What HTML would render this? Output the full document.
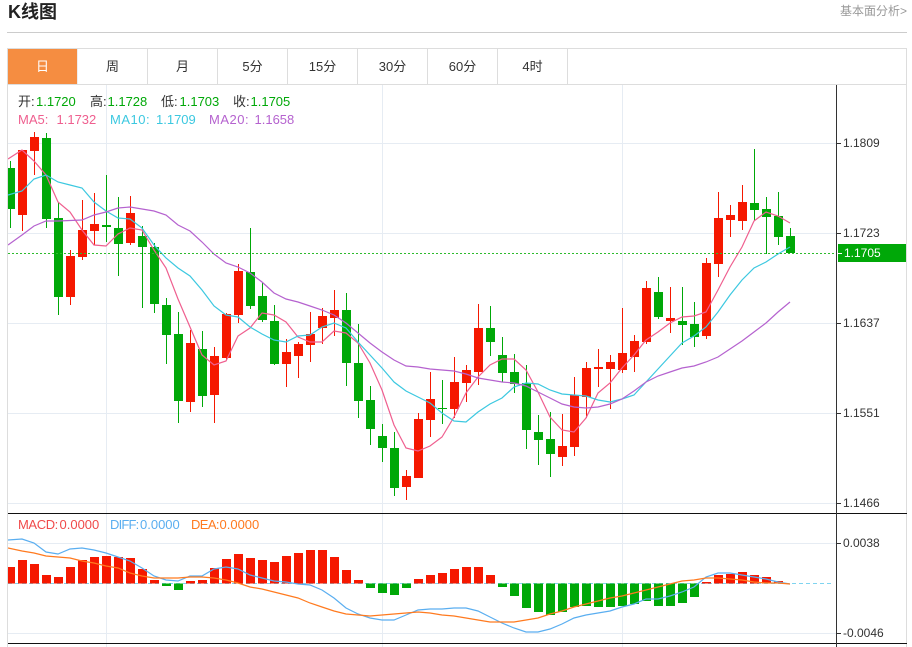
<!DOCTYPE html>
<html><head><meta charset="utf-8"><style>
html,body{margin:0;padding:0;background:#fff;width:912px;height:647px;overflow:hidden}
body{position:relative;font-family:"Liberation Sans","Noto Sans CJK SC",sans-serif}
.a{position:absolute;white-space:nowrap}
.tab{position:absolute;top:49px;height:35px;line-height:35px;width:69px;text-align:center;font-size:13px;color:#333;border-right:1px solid #ddd}
.l{position:absolute;white-space:nowrap;font-size:13px;line-height:18px}
.g{color:#00a808}.p{color:#ef5f8f}.c{color:#3cc8e0}.u{color:#b562cf}.ax{position:absolute;left:843px;font-size:12px;color:#333;line-height:14px}
.t1{top:93px}.t2{top:111px}.t3{top:516px}.k{color:#333}
</style></head><body>
<div class="a" style="left:8px;top:1px;font-size:18px;font-weight:bold;color:#222;line-height:23px">K线图</div>
<div class="a" style="right:5px;top:3px;font-size:12px;color:#999;line-height:16px">基本面分析&gt;</div>
<div class="a" style="left:7px;top:32px;width:900px;height:1px;background:#ccc"></div>
<div class="a" style="left:7px;top:48px;width:898px;height:599px;border:1px solid #ddd;border-bottom:0"></div>
<div class="a" style="left:8px;top:84px;width:898px;height:1px;background:#ddd"></div>
<div class="tab" style="left:8px;background:#f58d41;color:#fff;border-right:1px solid #eee">日</div>
<div class="tab" style="left:78px">周</div>
<div class="tab" style="left:148px">月</div>
<div class="tab" style="left:218px">5分</div>
<div class="tab" style="left:288px">15分</div>
<div class="tab" style="left:358px">30分</div>
<div class="tab" style="left:428px">60分</div>
<div class="tab" style="left:498px">4时</div>
<svg class="a" style="left:0;top:0" width="912" height="647" viewBox="0 0 912 647">
<defs><clipPath id="k"><rect x="8" y="85" width="828" height="562"/></clipPath></defs>
<path d="M8 143.5H836M8 233.5H836M8 323.5H836M8 413.5H836M8 503.5H836M8 543.5H836M8 633.5H836M106.5 85V647M382.5 85V647M622.5 85V647" stroke="#e6ecf3" fill="none"/>
<g clip-path="url(#k)">
<path fill="#00a808" d="M10 161h1v67h-1zM46 133h1v95h-1zM58 202h1v113h-1zM106 175h1v67h-1zM118 197h1v79h-1zM142 226h1v82h-1zM154 243h1v70h-1zM166 298h1v66h-1zM178 312h1v111h-1zM202 331h1v76h-1zM250 228h1v81h-1zM262 283h1v39h-1zM274 305h1v60h-1zM346 293h1v93h-1zM358 324h1v94h-1zM370 386h1v59h-1zM382 424h1v38h-1zM394 432h1v64h-1zM442 380h1v44h-1zM490 306h1v50h-1zM502 337h1v45h-1zM514 354h1v39h-1zM526 365h1v84h-1zM538 415h1v50h-1zM550 412h1v65h-1zM658 277h1v42h-1zM682 287h1v58h-1zM694 302h1v45h-1zM754 149h1v72h-1zM766 197h1v57h-1zM778 192h1v53h-1zM790 228h1v25h-1z
M8 168h7v41h-7zM42 138h9v81h-9zM54 218h9v79h-9zM102 225h9v2h-9zM114 228h9v16h-9zM138 236h9v11h-9zM150 247h9v57h-9zM162 305h9v30h-9zM174 334h9v67h-9zM198 349h9v47h-9zM246 272h9v34h-9zM258 296h9v24h-9zM270 321h9v43h-9zM342 310h9v53h-9zM354 363h9v38h-9zM366 400h9v29h-9zM378 436h9v12h-9zM390 448h9v40h-9zM438 408h9v1h-9zM486 328h9v14h-9zM498 355h9v18h-9zM510 372h9v12h-9zM522 383h9v47h-9zM534 432h9v8h-9zM546 439h9v15h-9zM654 292h9v25h-9zM678 321h9v4h-9zM690 324h9v13h-9zM750 203h9v7h-9zM762 209h9v8h-9zM774 216h9v21h-9zM786 236h9v17h-9z"/>
<path fill="#f51800" d="M22 150h1v81h-1zM34 132h1v43h-1zM70 250h1v55h-1zM82 200h1v60h-1zM94 193h1v52h-1zM130 196h1v49h-1zM190 330h1v82h-1zM214 347h1v76h-1zM226 313h1v47h-1zM238 264h1v59h-1zM286 339h1v48h-1zM298 342h1v36h-1zM310 312h1v50h-1zM322 308h1v36h-1zM334 290h1v46h-1zM406 470h1v30h-1zM418 413h1v65h-1zM430 372h1v65h-1zM454 357h1v61h-1zM466 365h1v37h-1zM478 304h1v81h-1zM562 414h1v52h-1zM574 377h1v79h-1zM586 362h1v56h-1zM598 349h1v38h-1zM610 355h1v54h-1zM622 308h1v65h-1zM634 335h1v37h-1zM646 281h1v63h-1zM670 287h1v46h-1zM706 258h1v81h-1zM718 192h1v85h-1zM730 205h1v32h-1zM742 185h1v45h-1z
M18 150h9v65h-9zM30 137h9v14h-9zM66 256h9v41h-9zM78 230h9v27h-9zM90 224h9v7h-9zM126 213h9v30h-9zM186 343h9v59h-9zM210 356h9v39h-9zM222 314h9v44h-9zM234 271h9v44h-9zM282 352h9v12h-9zM294 344h9v12h-9zM306 334h9v11h-9zM318 316h9v12h-9zM330 310h9v8h-9zM402 476h9v11h-9zM414 419h9v59h-9zM426 399h9v21h-9zM450 382h9v27h-9zM462 370h9v13h-9zM474 328h9v44h-9zM558 446h9v11h-9zM570 395h9v52h-9zM582 368h9v29h-9zM594 367h9v2h-9zM606 362h9v7h-9zM618 353h9v17h-9zM630 341h9v16h-9zM642 288h9v54h-9zM666 318h9v3h-9zM702 263h9v73h-9zM714 218h9v46h-9zM726 215h9v5h-9zM738 202h9v19h-9z"/>
<polyline fill="none" stroke="#ef5f8f" stroke-width="1.2" points="8,159 22,150 34,161 46,175 58,202 70,212 82,230 94,245 106,246 118,234 130,228 142,230 154,250 166,268 178,299 190,327 202,355 214,365 226,361 238,336 250,328 262,313 274,315 286,322 298,337 310,342 322,342 334,331 346,333 358,343 370,363 382,390 394,425 406,448 418,451 430,446 442,437 454,417 466,393 478,377 490,365 502,359 514,359 526,370 538,392 550,417 562,430 574,432 586,418 598,393 610,383 622,368 634,355 646,340 658,332 670,323 682,317 694,316 706,312 718,290 730,267 742,247 754,221 766,212 778,216 790,223"/>
<polyline fill="none" stroke="#3cc8e0" stroke-width="1.2" points="8,195 22,191 34,179 46,175 58,182 70,185 82,188 94,202 106,211 118,218 130,219 142,228 154,245 166,258 178,268 190,276 202,290 214,306 226,315 238,317 250,327 262,334 274,340 286,342 298,336 310,335 322,327 334,323 346,328 358,342 370,355 382,368 394,382 406,391 418,397 430,403 442,413 454,421 466,422 478,412 490,404 502,398 514,387 526,383 538,384 550,390 562,394 574,395 586,396 598,400 610,402 622,399 634,395 646,382 658,369 670,356 682,343 694,336 706,327 718,312 730,295 742,280 754,268 766,262 778,254 790,247"/>
<polyline fill="none" stroke="#b562cf" stroke-width="1.2" points="8,245 22,235 34,226 46,221 58,221 70,220.5 82,220 94,215 106,212 118,208 130,207 142,209 154,211 166,215 178,225 190,231 202,242 214,254 226,263 238,267 250,273 262,282 274,293 286,299 298,302 310,306 322,310 334,315 346,323 358,333 370,343 382,352 394,360 406,366 418,367 430,369 442,370 454,371 466,374 478,378 490,380 502,382 514,383 526,386 538,392 550,398 562,404 574,407 586,408 598,407 610,404 622,399 634,391 646,382 658,376 670,372 682,368 694,366 706,362 718,357 730,349 742,341 754,332 766,323 778,312 790,302"/>
<path d="M8 253.5H836" stroke="#2dbb2d" stroke-dasharray="2 2"/>
<path d="M8 583.5H832" stroke="#7fd4f0" stroke-dasharray="4 3"/>
<path fill="#f51800" d="M8 567h7V583.5h-7zM18 560h9V583.5h-9zM30 564h9V583.5h-9zM42 575h9V583.5h-9zM54 577h9V583.5h-9zM66 567h9V583.5h-9zM78 560h9V583.5h-9zM90 557h9V583.5h-9zM102 556h9V583.5h-9zM114 557h9V583.5h-9zM126 558h9V583.5h-9zM138 569h9V583.5h-9zM150 580h9V583.5h-9zM186 581h9V583.5h-9zM198 580h9V583.5h-9zM210 568h9V583.5h-9zM222 559h9V583.5h-9zM234 554h9V583.5h-9zM246 558h9V583.5h-9zM258 560h9V583.5h-9zM270 562h9V583.5h-9zM282 556h9V583.5h-9zM294 553h9V583.5h-9zM306 550h9V583.5h-9zM318 550h9V583.5h-9zM330 557h9V583.5h-9zM342 570h9V583.5h-9zM354 580h9V583.5h-9zM414 579h9V583.5h-9zM426 575h9V583.5h-9zM438 573h9V583.5h-9zM450 569h9V583.5h-9zM462 567h9V583.5h-9zM474 567h9V583.5h-9zM486 575h9V583.5h-9zM702 582h9V583.5h-9zM714 575h9V583.5h-9zM726 574h9V583.5h-9zM738 572h9V583.5h-9zM750 575h9V583.5h-9zM762 577h9V583.5h-9zM774 581h9V583.5h-9z"/>
<path fill="#00a808" d="M162 583.5h9V586h-9zM174 583.5h9V590h-9zM366 583.5h9V588h-9zM378 583.5h9V593h-9zM390 583.5h9V595h-9zM402 583.5h9V588h-9zM498 583.5h9V587h-9zM510 583.5h9V596h-9zM522 583.5h9V608h-9zM534 583.5h9V612h-9zM546 583.5h9V615h-9zM558 583.5h9V612h-9zM570 583.5h9V607h-9zM582 583.5h9V606h-9zM594 583.5h9V607h-9zM606 583.5h9V607h-9zM618 583.5h9V606h-9zM630 583.5h9V604h-9zM642 583.5h9V601h-9zM654 583.5h9V606h-9zM666 583.5h9V606h-9zM678 583.5h9V603h-9zM690 583.5h9V597h-9z"/>
<polyline fill="none" stroke="#5aaef0" stroke-width="1.2" points="8,540 22,539 34,543 46,552 58,554 70,549 82,548 94,550 106,553 118,557 130,561 142,568 154,576 166,580 178,581 190,576 202,576 214,569 226,567 238,569 250,575 262,578 274,581 286,582 298,584 310,585 322,590 334,598 346,608 358,614 370,618 382,620 394,620 406,615 418,610 430,609 442,609 454,608 466,608 478,611 490,617 502,623 514,628 526,632 538,632 550,629 562,624 574,618 586,615 598,613 610,611 622,607 634,604 646,599 658,599 670,596 682,592 694,587 706,577 718,573 730,573 742,575 754,577 766,579 778,582 790,584"/>
<polyline fill="none" stroke="#ff7a1f" stroke-width="1.2" points="8,548 22,551 34,553 46,556 58,557 70,558 82,561 94,563 106,566 118,568 130,573 142,576 154,578 166,578 178,578 190,577 202,577 214,578 226,580 238,583 250,587 262,589 274,592 286,595 298,598 310,603 322,607 334,611 346,614 358,615 370,616 382,615 394,614 406,613 418,612 430,613 442,615 454,616 466,618 478,620 490,622 502,622 514,622 526,620 538,618 550,614 562,611 574,607 586,604 598,601 610,598 622,596 634,593 646,590 658,587 670,584 682,581 694,580 706,578 718,578 730,579 742,580 754,582 766,583 778,583 790,584"/>
</g>
<path d="M8 513.5H907M8 643.5H907" stroke="#111" fill="none"/>
<path d="M836.5 85V647" stroke="#333" fill="none"/>
<path d="M837 143.5h4M837 233.5h4M837 323.5h4M837 413.5h4M837 503.5h4M837 543.5h4M837 633.5h4" stroke="#333" fill="none"/>
<rect x="838" y="244" width="68" height="18" fill="#00a808"/>
<path d="M838 253.5h4" stroke="#fff"/>
</svg>
<div class="l t1 k" style="left:18px">开:</div><div class="l t1 g" style="left:36px">1.1720</div>
<div class="l t1 k" style="left:90px">高:</div><div class="l t1 g" style="left:107.5px">1.1728</div>
<div class="l t1 k" style="left:161px">低:</div><div class="l t1 g" style="left:179.5px">1.1703</div>
<div class="l t1 k" style="left:233px">收:</div><div class="l t1 g" style="left:250.5px">1.1705</div>
<div class="l t2 p" style="left:18px">MA5:</div><div class="l t2 p" style="left:56.5px">1.1732</div>
<div class="l t2 c" style="left:110px;letter-spacing:.5px">MA10:</div><div class="l t2 c" style="left:156px">1.1709</div>
<div class="l t2 u" style="left:209px;letter-spacing:.5px">MA20:</div><div class="l t2 u" style="left:254.5px">1.1658</div>
<div class="l t3" style="left:18px;color:#f04a4a;letter-spacing:-.4px">MACD:</div><div class="l t3" style="left:59.5px;color:#f04a4a">0.0000</div>
<div class="l t3" style="left:110px;color:#5aaef0;letter-spacing:-.8px">DIFF:</div><div class="l t3" style="left:140px;color:#5aaef0">0.0000</div>
<div class="l t3" style="left:191px;color:#ff7a1f;letter-spacing:-.6px">DEA:</div><div class="l t3" style="left:219.5px;color:#ff7a1f">0.0000</div>
<div class="ax" style="top:136px">1.1809</div>
<div class="ax" style="top:226px">1.1723</div>
<div class="ax" style="top:316px">1.1637</div>
<div class="ax" style="top:406px">1.1551</div>
<div class="ax" style="top:496px">1.1466</div>
<div class="ax" style="top:536px">0.0038</div>
<div class="ax" style="top:626px">-0.0046</div>
<div class="ax" style="top:246px;left:844px;color:#fff">1.1705</div>
</body></html>
